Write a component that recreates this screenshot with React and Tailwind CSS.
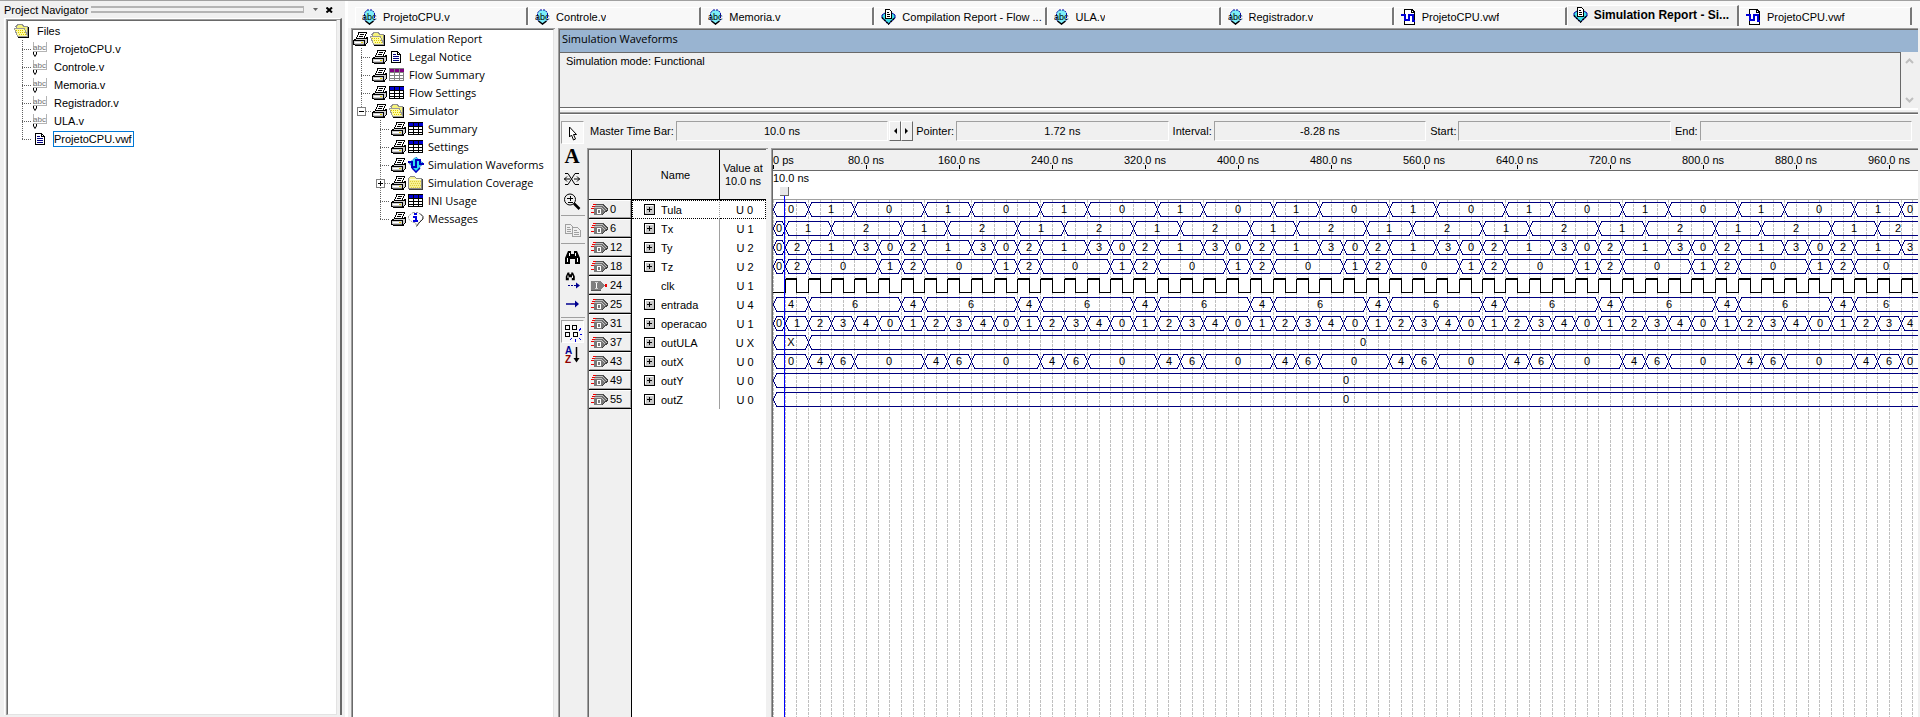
import React from "react";

const SANS = "font-['Liberation_Sans',Arial,sans-serif] text-[11px] leading-[14px]";
const HUMAN = "font-['Open_Sans','Noto_Sans',sans-serif] text-[11px] leading-[18px]";

/* ---------- tree and tab icons ---------- */

function FolderOpen() {
  return (
    <svg width="16" height="16" shapeRendering="crispEdges" className="shrink-0">
      <path d="M2 3.5 L4 1.5 H8 L10 3.5 H13.5 V13.5 H4 Z" fill="#f5f27a" stroke="#909090" />
      <path d="M0.5 5.5 H10.5 L13.5 13.5 H3.5 Z" fill="#fffba0" stroke="#9a9a9a" />
      <path d="M2 7h1v1h-1zM4 7h1v1h-1zM6 7h1v1h-1zM8 7h1v1h-1zM4 9h1v1h-1zM6 9h1v1h-1zM8 9h1v1h-1zM10 9h1v1h-1zM5 11h1v1h-1zM7 11h1v1h-1zM9 11h1v1h-1zM11 11h1v1h-1z" fill="#d8c800" />
      <path d="M14.5 4 V14.5 H4" fill="none" stroke="#000" />
    </svg>
  );
}

function FolderClosed() {
  return (
    <svg width="16" height="16" shapeRendering="crispEdges" className="shrink-0">
      <path d="M0.5 13.5 V3.5 L2.5 1.5 H6.5 L8.5 3.5 H13.5 V13.5 Z" fill="#f6f090" stroke="#8a8a8a" />
      <path d="M1.5 4.5 H13" stroke="#ffffd8" />
      <path d="M2 6.5H13M3 8.5H13M2 10.5H13M3 12.5H13" stroke="#dccb3c" strokeDasharray="1 1" />
      <path d="M14.5 4 V14.5 H1" fill="none" stroke="#404040" />
    </svg>
  );
}

function Printer() {
  return (
    <svg width="17" height="16" shapeRendering="crispEdges" className="shrink-0">
      <path d="M6 1.5 H13.5 L11 7.5 H3.5 Z" fill="#fff" stroke="#000" />
      <path d="M7 3.5H11M6 5.5H10" stroke="#000" />
      <path d="M0.5 9.5 L3.5 7.5 H12.5 L14.500 6.5 V11.5 L12 14.5 H2.5 L0.5 13 Z" fill="#d0d0d0" stroke="#000" />
      <path d="M1 9.5H11.5V14" fill="none" stroke="#000" />
      <path d="M2 11.5H10" stroke="#fff" />
      <path d="M2 13.5H11" stroke="#606060" />
      <path d="M8 11h2v1h-2z" fill="#e0d000" />
    </svg>
  );
}

function DocIcon() {
  return (
    <svg width="16" height="16" shapeRendering="crispEdges" className="shrink-0">
      <path d="M2.5 2.5 H8.5 L11.5 5.5 V13.5 H2.5 Z" fill="#fff" stroke="#000" />
      <path d="M8.5 2.5V5.5H11.5" fill="none" stroke="#000" />
      <path d="M4 5.5H7M4 7.5H10M4 9.5H10M4 11.5H10" stroke="#000080" />
    </svg>
  );
}

function TableIcon({ head, line }) {
  return (
    <svg width="16" height="16" shapeRendering="crispEdges" className="shrink-0">
      <rect x="0.5" y="1.5" width="14" height="12" fill="#fff" stroke={line} />
      <rect x="1" y="2" width="14" height="3" fill={head} />
      <path d="M1 5.5H15M1 8.5H15M1 11.5H15M5.5 2V14M10.5 2V14" stroke={line} />
    </svg>
  );
}
const SummaryIcon = () => <TableIcon head="#800080" line="#808080" />;
const GridIcon = () => <TableIcon head="#0000d0" line="#000" />;

function WaveIcon() {
  return (
    <svg width="16" height="16" className="shrink-0">
      <path d="M8 0 L15 6 L8 15.5 L1 6 Z" fill="#30e0f0" stroke="#2040c0" strokeDasharray="1 1" />
      <path d="M0 5H4V10H8V3H12V7H16" fill="none" stroke="#0000c0" strokeWidth="2" shapeRendering="crispEdges" />
      <path d="M4 11 L8 15 L12 11" fill="none" stroke="#0000c0" strokeWidth="1.5" />
    </svg>
  );
}

function MessagesIcon() {
  return (
    <svg width="16" height="16" className="shrink-0">
      <path d="M5 1.5 H10 L14.5 5 V8 L10.5 11.5 L8.5 15 L7.5 11.5 H5 L0.5 8 V5 Z" fill="#fff" stroke="#a0a0a0" strokeDasharray="2 1" />
      <path d="M12 2.5 L15 5.5 V8 L11 12 L8.500 15.500" fill="none" stroke="#303030" />
      <path d="M6 2h3v2h-3zM5 5h4v4h1v1.5h-5v-1.500h1.500v-2.500h-1.500z" fill="#0000e0" shapeRendering="crispEdges" />
    </svg>
  );
}

function VerilogFile() {
  return (
    <svg width="15" height="16" className="shrink-0">
      <path d="M0.5 1V8.500M0 10.5H13.500V1" fill="none" stroke="#b4b4b4" shapeRendering="crispEdges" />
      <text x="0" y="9" className="font-['Liberation_Sans',sans-serif] text-[8px]" fill="#707070">abc</text>
      <path d="M0.500 11V13L2 15.500L3.500 13V11" fill="none" stroke="#000" />
    </svg>
  );
}

function VerilogTab() {
  return (
    <svg width="15" height="16" className="shrink-0">
      <path d="M5 1 H10 L12.500 4 V11 L7.500 15 L2.500 11 V4 Z" fill="#7ceef8" stroke="#0000a0" strokeDasharray="2 1" />
      <path d="M3.500 12 L7.500 15 L11.500 12" fill="none" stroke="#000" strokeWidth="1.500" />
      <text x="0" y="11" className="font-['Liberation_Sans',sans-serif] text-[9px]" fill="#000">abc</text>
    </svg>
  );
}

function ReportTab() {
  return (
    <svg width="15" height="16" className="shrink-0">
      <path d="M1 6 L4 4 H11 L14 6 V9 L7.500 15 L1 9 Z" fill="#40e0e8" stroke="#0000a0" />
      <path d="M1 8.500 L7.500 15 L14 8.500" fill="none" stroke="#000" strokeDasharray="2 1" strokeWidth="1.500" />
      <g shapeRendering="crispEdges">
        <path d="M4.500 0.500 H8.500 L10.500 2.500 V9.500 H4.500 Z" fill="#fff" stroke="#000" />
        <path d="M6 3.500H8M6 5.500H9M6 7.500H9" stroke="#000" />
      </g>
    </svg>
  );
}

function WaveTab() {
  return (
    <svg width="15" height="16" shapeRendering="crispEdges" className="shrink-0">
      <path d="M3.500 5V0.500H11L13.500 3V15.500H3.500V11" fill="#fff" stroke="#000" />
      <path d="M10.500 0.500V3.500H13.500" fill="none" stroke="#000" />
      <path d="M0 6H4V11H8V6H12V12H14" fill="none" stroke="#0000d8" strokeWidth="2" />
    </svg>
  );
}

/* ---------- shared frames ---------- */

function Sunken({ className = "", inner = "", children }) {
  return (
    <div className={"flex border-l border-t border-[#a0a0a0] " + className}>
      <div className={"flex min-w-0 flex-1 border-l border-t border-[#696969] " + inner}>{children}</div>
    </div>
  );
}

/* ---------- project navigator ---------- */

const FILES = ["ProjetoCPU.v", "Controle.v", "Memoria.v", "Registrador.v", "ULA.v", "ProjetoCPU.vwf"];

function Branch({ last, className = "" }) {
  return (
    <svg width="19" height="18" shapeRendering="crispEdges" className={"shrink-0 " + className}>
      <path d={last ? "M8.500 0V10" : "M8.500 0V18"} stroke="#606060" strokeDasharray="1 1" />
      <path d="M8 9.500H18" stroke="#606060" strokeDasharray="1 1" />
    </svg>
  );
}

function Navigator() {
  return (
    <aside className="flex w-[345px] shrink-0 flex-col pb-[2px]">
      <header className="flex h-[17px] items-center pl-1 pr-2">
        <h2 className={SANS}>Project Navigator</h2>
        <div className="ml-[3px] h-[7px] flex-1 border-y-2 border-r border-[#b4b4b4]" />
        <button aria-label="Menu" className="ml-[5px] flex w-3 justify-center">
          <svg width="5" height="3"><path d="M0 0H5L2.500 3Z" fill="#606060" /></svg>
        </button>
        <button aria-label="Close" className="flex w-4 justify-center">
          <svg width="7" height="6"><path d="M0.500 0.500L6 5.500M6 0.500L0.500 5.500" stroke="#000" strokeWidth="2" /></svg>
        </button>
      </header>
      <div className="ml-1 mr-[3px] flex flex-1 border-l border-t border-white border-r-2 border-r-[#696969]">
        <Sunken className="ml-px flex-1" inner="bg-white border-b border-r border-b-[#e3e3e3] border-r-[#e3e3e3] mr-[3px]">
          <div className={"flex-1 pl-[6px] pt-px " + SANS}>
            <div className="flex h-[18px] items-center gap-[7px]">
              <FolderOpen />
              Files
            </div>
            <ul>
              {FILES.map((f, i) => (
                <li key={f} className="flex h-[18px] items-center">
                  <Branch last={i === FILES.length - 1} />
                  {i < 5 ? <VerilogFile /> : <DocIcon />}
                  {i < 5 ? (
                    <span className="ml-[6px]">{f}</span>
                  ) : (
                    <span className="ml-1 border border-[#0078d7] pr-px">{f}</span>
                  )}
                </li>
              ))}
            </ul>
          </div>
        </Sunken>
      </div>
    </aside>
  );
}

/* ---------- tab strip ---------- */

const TABS = [
  ["ProjetoCPU.v", VerilogTab],
  ["Controle.v", VerilogTab],
  ["Memoria.v", VerilogTab],
  ["Compilation Report - Flow ...", ReportTab],
  ["ULA.v", VerilogTab],
  ["Registrador.v", VerilogTab],
  ["ProjetoCPU.vwf", WaveTab],
  ["Simulation Report - Si...", ReportTab],
  ["ProjetoCPU.vwf", WaveTab],
];

function Tabs() {
  return (
    <div role="tablist" className="flex h-[27px] shrink-0 bg-[#f8f8f8] pl-[7px] pr-2">
      {TABS.map(([label, Icon], i) => {
        const active = i === 7;
        return (
          <button
            key={i}
            role="tab"
            aria-selected={active}
            className={
              "flex min-w-0 flex-1 items-center whitespace-nowrap border-l border-t border-white border-r-2 border-r-[#787878] text-left font-['Liberation_Sans',Arial,sans-serif] leading-[14px] " +
              (active ? "mb-[2px] mt-1 gap-[6px] bg-[#f0f0f0] pb-[2px] pl-[5px] text-[12px] font-bold" : "mb-[3px] mt-[6px] gap-[6px] pl-[6px] text-[11px]")
            }
          >
            <Icon />
            <span className="min-w-0 truncate">{label}</span>
          </button>
        );
      })}
    </div>
  );
}

/* ---------- report tree ---------- */

const REPORT = [
  { level: 1, label: "Legal Notice", Icon: DocIcon },
  { level: 1, label: "Flow Summary", Icon: SummaryIcon },
  { level: 1, label: "Flow Settings", Icon: GridIcon },
  { level: 1, label: "Simulator", Icon: FolderOpen, box: "-", last: true },
  { level: 2, label: "Summary", Icon: GridIcon },
  { level: 2, label: "Settings", Icon: GridIcon },
  { level: 2, label: "Simulation Waveforms", Icon: WaveIcon },
  { level: 2, label: "Simulation Coverage", Icon: FolderClosed, box: "+" },
  { level: 2, label: "INI Usage", Icon: GridIcon },
  { level: 2, label: "Messages", Icon: MessagesIcon, last: true },
];

function Expander({ sign, last }) {
  return (
    <button aria-label={sign === "+" ? "Expand" : "Collapse"} className="shrink-0">
      <svg width="19" height="18" shapeRendering="crispEdges" className="block">
        <path d={last ? "M8.500 0V5" : "M8.500 0V18"} stroke="#808080" strokeDasharray="1 1" />
        <path d="M13 9.500H19" stroke="#808080" strokeDasharray="1 1" />
        <rect x="4.500" y="5.500" width="8" height="8" fill="#fff" stroke="#808080" />
        <path d={sign === "+" ? "M6 9.500H11M8.500 7V12" : "M6 9.500H11"} stroke="#000" />
      </svg>
    </button>
  );
}

function ReportTree() {
  return (
    <Sunken className="ml-[3px] w-[204px] shrink-0" inner="mr-px border-r border-r-[#e3e3e3] bg-white">
      <div className={"min-w-0 flex-1 whitespace-nowrap " + HUMAN}>
        <div className="flex h-[18px] items-center">
          <Printer />
          <FolderOpen />
          <span className="ml-1">Simulation Report</span>
        </div>
        <ul>
          {REPORT.map(({ level, label, Icon, box, last }) => (
            <li key={label} className="flex h-[18px] items-center">
              {level === 2 && <span className="w-[19px] shrink-0" />}
              {box ? <Expander sign={box} last={last} /> : <Branch last={last} />}
              <Printer />
              <Icon />
              <span className="ml-1">{label}</span>
            </li>
          ))}
        </ul>
      </div>
    </Sunken>
  );
}

/* ---------- drawing toolbar ---------- */

const CursorTool = () => (
  <svg width="22" height="22"><path d="M7.500 5V15L9.500 13L11.500 18L13.500 17L11.500 12.500H14.500Z" fill="#fff" stroke="#000" /></svg>
);
const TextTool = () => (
  <svg width="22" height="22"><text x="10" y="18" textAnchor="middle" className="font-['Liberation_Serif',serif] text-[21px] font-bold">A</text></svg>
);
const FlipTool = () => (
  <svg width="22" height="22" fill="none" stroke="#000">
    <path d="M3 5.500H6L13 16.500H17M3 16.500H6L13 5.500H17M2 11H8M12 11H18" />
    <path d="M5 8.500L2.500 11L5 13.500M15 8.500L17.500 11L15 13.500" />
  </svg>
);
const ZoomTool = () => (
  <svg width="22" height="22" fill="none" stroke="#000">
    <circle cx="8" cy="8.500" r="5.500" />
    <path d="M5 7.500H11M8 4.500V10M5.500 11.500H10.500" shapeRendering="crispEdges" />
    <path d="M12 12.500L17.500 18" strokeWidth="2.500" />
  </svg>
);
const CopyTool = () => (
  <svg width="22" height="22" fill="#f0f0f0" stroke="#a0a0a0" shapeRendering="crispEdges">
    <path d="M3.500 5.500H8.500L10.500 7.500V14.500H3.500Z" />
    <path d="M10.500 8.500H15.500L18.500 11.500V17.500H10.500Z" />
    <path d="M5 8.500H8M5 10.500H9M5 12.500H9M12 11.500H15M12 13.500H17M12 15.500H17" />
  </svg>
);
const BINOC = "M3 17V11L6 4H9V7H12V4H15L18 11V17H13V12H8V17Z";
const FindTool = () => (
  <svg width="22" height="22">
    <path d={BINOC} fill="#000" />
    <path d="M5.500 11V15M7.500 6V9M13.500 6V9M15.500 11V15" stroke="#fff" shapeRendering="crispEdges" />
  </svg>
);
const FindNextTool = () => (
  <svg width="22" height="22">
    <path d={BINOC} fill="#000" transform="translate(2 0) scale(.6)" />
    <path d="M6 5.500V8M10.500 5.500V8" stroke="#fff" />
    <path d="M6 15.500H14" stroke="#000090" strokeDasharray="2 1" />
    <path d="M14 12.500L18 15.500L14 18.500Z" fill="#000090" />
  </svg>
);
const ArrowTool = () => (
  <svg width="22" height="22"><path d="M4 11H15" stroke="#000090" strokeWidth="1.500" /><path d="M13 7.500L17 11L13 14.500Z" fill="#000090" /></svg>
);
const SnapTool = () => (
  <svg width="22" height="22" fill="none" shapeRendering="crispEdges">
    <path d="M3.500 4.500H7.500V8.500H3.500ZM10.500 4.500H14.500V8.500H10.500ZM3.500 11.500H7.500V15.500H3.500ZM11.500 11.500H15.500V15.500H11.500Z" stroke="#000" />
    <path d="M17 9.500L19 7.500M17.500 13.500H20M17 17L19 19M13.500 18V21M10 17L8 19" stroke="#0000e0" />
  </svg>
);
const SortTool = () => (
  <svg width="22" height="22">
    <text x="3" y="10" className="font-['Liberation_Sans',sans-serif] text-[10px] font-bold" fill="#000090">A</text>
    <text x="3" y="19" className="font-['Liberation_Sans',sans-serif] text-[10px] font-bold" fill="#900000">Z</text>
    <path d="M14.500 3V16" stroke="#000" strokeWidth="1.500" />
    <path d="M11.500 14L14.500 18.500L17.500 14Z" fill="#000" />
  </svg>
);

const TOOLS = [
  ["Selection", CursorTool, true],
  ["Text", TextTool],
  ["Waveform editing", FlipTool],
  ["Zoom", ZoomTool],
  null,
  ["Copy", CopyTool],
  null,
  ["Find", FindTool],
  ["Find next", FindNextTool],
  ["Next transition", ArrowTool],
  null,
  ["Snap to grid", SnapTool, true],
  ["Sort", SortTool],
];

function Toolbar() {
  return (
    <div role="toolbar" className="flex w-[27px] shrink-0 flex-col pl-px pt-[6px]">
      {TOOLS.map((t, i) => {
        if (!t) return <div key={i} className="my-[2px] h-px w-6 shrink-0 bg-[#a0a0a0]" />;
        const [name, Icon, on] = t;
        return (
          <button
            key={i}
            aria-label={name}
            className={
              "flex h-[23px] w-[23px] shrink-0 items-center justify-center border " +
              (on ? "border-[#a0a0a0] border-b-white border-r-white bg-[#f8f8f8]" : "border-transparent")
            }
          >
            <Icon />
          </button>
        );
      })}
    </div>
  );
}

/* ---------- time bar ---------- */

function Field({ id, label, value }) {
  return (
    <>
      <label htmlFor={id} className="shrink-0">{label}</label>
      <input
        id={id}
        readOnly
        defaultValue={value}
        className="ml-[2px] h-5 min-w-0 flex-1 border border-[#a0a0a0] border-b-white border-r-white bg-transparent text-center outline-none"
      />
    </>
  );
}

function StepButton({ label, d }) {
  return (
    <button
      aria-label={label}
      className="flex h-5 w-3 shrink-0 items-center justify-center border border-white border-b-[#696969] border-r-[#696969]"
    >
      <svg width="4" height="6"><path d={d} fill="#000" /></svg>
    </button>
  );
}

function TimeBar() {
  return (
    <div className={"flex h-[33px] shrink-0 items-center pb-px pl-[3px] pr-[6px] " + SANS}>
      <Field id="master" label="Master Time Bar:" value="10.0 ns" />
      <div className="mr-[3px] flex pl-px">
        <StepButton label="Previous" d="M4 0V6L1 3Z" />
        <StepButton label="Next" d="M0 0V6L3 3Z" />
      </div>
      <Field id="pointer" label="Pointer:" value="1.72 ns" />
      <span className="w-1" />
      <Field id="interval" label="Interval:" value="-8.28 ns" />
      <span className="w-1" />
      <Field id="start" label="Start:" value="" />
      <span className="w-1" />
      <Field id="end" label="End:" value="" />
    </div>
  );
}

/* ---------- signals ---------- */

const END = 985;

function repeat(head, cycle) {
  const out = [...head];
  let t = head.length ? head[head.length - 1][0] : 0;
  for (let i = 0; t < END; i++) {
    const [dt, v] = cycle[i % cycle.length];
    t += dt;
    out.push([t, v]);
  }
  return out;
}

const SIGNALS = [
  { n: 0, name: "Tula", value: "U 0", seg: repeat([[30, "0"]], [[40, "1"], [60, "0"]]) },
  { n: 6, name: "Tx", value: "U 1", seg: repeat([[10, "0"]], [[40, "1"], [60, "2"]]) },
  { n: 12, name: "Ty", value: "U 2", seg: repeat([[10, "0"]], [[20, "2"], [40, "1"], [20, "3"], [20, "0"]]) },
  { n: 18, name: "Tz", value: "U 2", seg: repeat([[10, "0"]], [[20, "2"], [60, "0"], [20, "1"]]) },
  { n: 24, name: "clk", value: "U 1", clock: true },
  { n: 25, name: "entrada", value: "U 4", seg: repeat([[30, "4"]], [[80, "6"], [20, "4"]]) },
  { n: 31, name: "operacao", value: "U 1", seg: repeat([[10, "0"]], [[20, "1"], [20, "2"], [20, "3"], [20, "4"], [20, "0"]]) },
  { n: 37, name: "outULA", value: "U X", seg: [[30, "X"], [END, "0"]] },
  { n: 43, name: "outX", value: "U 0", seg: repeat([[30, "0"]], [[20, "4"], [20, "6"], [60, "0"]]) },
  { n: 49, name: "outY", value: "U 0", seg: [[END, "0"]] },
  { n: 55, name: "outZ", value: "U 0", seg: [[END, "0"]] },
];

function BusPin() {
  return (
    <svg width="17" height="13" shapeRendering="crispEdges" className="shrink-0">
      <path d="M5 1H12L16 5V7L12 12H3V5Z" fill="#c0c0c0" />
      <path d="M5 1.500H12L16.500 6" fill="none" stroke="#505050" />
      <path d="M4 3.500H11L15 7.500" fill="none" stroke="#707070" />
      <path d="M2 1.500H5M1 3.500H4M0 5.500H3M0 9.500H3" stroke="#f00000" />
      <path d="M3 5H10L14 8.500L11 12H3Z" fill="#787878" />
      <path d="M11 12L16.500 7V5" fill="none" stroke="#404040" />
      <rect x="6.500" y="6.500" width="3" height="4" fill="none" stroke="#fff" />
    </svg>
  );
}

function InputPin() {
  return (
    <svg width="17" height="13" shapeRendering="crispEdges" className="shrink-0">
      <path d="M0 2H10L14 6.500L10 11H0Z" fill="#808080" />
      <path d="M0 11.500H10" stroke="#505050" />
      <path d="M5.500 4V9" stroke="#fff" />
      <path d="M4 3.500H7M4 9.500H7" stroke="#d0d0d0" />
      <rect x="14" y="5" width="2" height="3" fill="#f00000" />
    </svg>
  );
}

function PlusBox() {
  return (
    <button aria-label="Expand" className="block h-[11px] w-[11px]">
      <svg width="11" height="11" shapeRendering="crispEdges" className="block">
        <rect x="0.500" y="0.500" width="10" height="10" fill="#c8c8c8" stroke="#000" />
        <path d="M1 1.500H9M1.500 1V9" stroke="#fff" />
        <path d="M3 5.500H8M5.500 3V8" stroke="#000" />
      </svg>
    </button>
  );
}

function SignalTable() {
  return (
    <Sunken className="w-[181px] shrink-0 bg-[#f0f0f0]" inner="mr-[2px]">
      <div className={"flex flex-1 flex-col bg-white " + SANS}>
        <table className="w-[177px] table-fixed border-separate border-spacing-0">
          <thead>
            <tr className="h-[50px] bg-[#f0f0f0]">
              <th className="w-[43px] border-b border-r border-black p-0" aria-label="Node" />
              <th className="w-[88px] border-b border-r border-black p-0 font-normal">Name</th>
              <th className="w-[46px] whitespace-nowrap border-b border-black p-0 text-center font-normal leading-[13px]">
                Value at
                <br />
                10.0 ns
              </th>
            </tr>
          </thead>
          <tbody>
            {SIGNALS.map((s, i) => (
              <tr key={s.n} className="h-[19px]">
                <td className="border-b border-r border-black bg-[#f0f0f0] p-0">
                  <div className="flex h-[18px] items-center gap-[2px] border-b border-l border-r border-t border-b-[#a0a0a0] border-l-white border-r-[#a0a0a0] border-t-white pl-px">
                    {s.clock ? <InputPin /> : <BusPin />}
                    {s.n}
                  </div>
                </td>
                <td className={i === 0 ? "border-y border-l border-r border-dotted border-black border-r-[#a0a0a0] p-0" : "border-r border-[#a0a0a0] p-0"}>
                  <div className={"flex items-center gap-[6px] " + (i === 0 ? "pl-[11px]" : "pl-3")}>
                    {s.clock ? <span className="w-[11px]" /> : <PlusBox />}
                    {s.name}
                  </div>
                </td>
                <td className={"p-0 pl-1 text-center " + (i === 0 ? "border-y border-r border-dotted border-black" : "")}>{s.value}</td>
              </tr>
            ))}
          </tbody>
        </table>
        <div className="flex flex-1">
          <div className="w-[43px] border-r border-black bg-[#f0f0f0]" />
        </div>
      </div>
    </Sunken>
  );
}

/* ---------- waveform chart ---------- */

const SCALE = 93 / 80;
const FAR = 6000;
const px = (t) => Math.round(t * SCALE);

function Bus({ seg, y }) {
  const top = y + 2.5;
  const bottom = y + 16.5;
  const mid = y + 9.5;
  return seg.map(([t, v], i) => {
    const a = px(i ? seg[i - 1][0] : 0) + 0.5;
    const open = t >= END;
    const b = px(Math.min(t, END)) + 0.5;
    const d = open
      ? `M${FAR} ${top}H${a + 3}L${a} ${mid}L${a + 3} ${bottom}H${FAR}`
      : `M${a + 3} ${top}H${b - 3}L${b} ${mid}L${b - 3} ${bottom}H${a + 3}L${a} ${mid}Z`;
    return (
      <g key={i}>
        <path d={d} fill="none" stroke="#000080" shapeRendering="crispEdges" />
        <text x={Math.floor((a + b) / 2)} y={y + 13} textAnchor="middle">{v}</text>
      </g>
    );
  });
}

function Clock({ y }) {
  const hi = y + 3;
  const lo = y + 16.5;
  let d = `M0 ${lo}`;
  const tops = [];
  for (let t = 10; t < END; t += 20) {
    const a = px(t) + 0.5;
    const b = px(t + 10) + 0.5;
    d += `H${a}V${hi}H${b}V${lo}`;
    tops.push(`M${a} ${hi}H${b}`);
  }
  return (
    <g fill="none" stroke="#000" shapeRendering="crispEdges">
      <path d={d + `H${px(END)}`} />
      <path d={tops.join("")} strokeWidth="2" />
    </g>
  );
}

function Waveforms() {
  const grid = Array.from({ length: 99 }, (_, i) => px(i * 10));
  const ticks = Array.from({ length: 13 }, (_, i) => i * 80);
  return (
    <Sunken className="min-w-0 flex-1" inner="bg-white">
      <svg width="100%" height="100%" className="block min-w-0 flex-1 overflow-hidden font-['Liberation_Sans',Arial,sans-serif] text-[11px]" role="img" aria-label="Simulation waveforms">
        <rect width="100%" height="20" fill="#f0f0f0" />
        <rect y="20" width="100%" height="1" fill="#696969" />
        <rect y="49" width="100%" height="1" fill="#a0a0a0" />
        {ticks.map((t) => (
          <g key={t}>
            <rect x={px(t)} y="15" width="1" height="4" fill="#000" />
            <text x={px(t)} y="14" textAnchor={t ? "middle" : "start"}>{t ? `${t}.0 ns` : "0 ps"}</text>
          </g>
        ))}
        <text x="0" y="32">10.0 ns</text>
        <g stroke="#c0c0c0" strokeDasharray="3 1" shapeRendering="crispEdges">
          {grid.map((x) => (
            <line key={x} x1={x + 0.5} x2={x + 0.5} y1="50" y2={FAR} />
          ))}
        </g>
        {SIGNALS.map((s, i) =>
          s.clock ? <Clock key={s.n} y={50 + i * 19} /> : <Bus key={s.n} seg={s.seg} y={50 + i * 19} />
        )}
        <g shapeRendering="crispEdges">
          <rect x={px(10) - 1} y="46" width="1" height="100%" fill="#0000ff" />
          <rect x="7" y="37" width="9" height="9" fill="#696969" />
          <rect x="7" y="37" width="8" height="8" fill="#e8e8e8" />
        </g>
      </svg>
    </Sunken>
  );
}

/* ---------- page ---------- */

function Chevron({ d }) {
  return (
    <button aria-label="Scroll" className="flex h-[17px] items-center justify-center">
      <svg width="9" height="6"><path d={d} fill="none" stroke="#bfbfbf" strokeWidth="2" /></svg>
    </button>
  );
}

export default function App() {
  return (
    <div className="flex h-screen min-w-[1200px] flex-col overflow-hidden border-t border-[#a0a0a0] bg-[#f0f0f0] text-black">
      <div className="flex min-h-0 flex-1">
        <Navigator />
        <div className="w-[3px] shrink-0 bg-white" />
        <div className="flex min-w-0 flex-1 flex-col">
          <Tabs />
          <div className="flex min-h-0 flex-1">
            <ReportTree />
            <Sunken className="ml-[3px] mr-[2px] min-w-0 flex-1" inner="flex-col">
              <h1 className={"h-[22px] shrink-0 bg-[#99b4d1] pl-[2px] " + HUMAN}>Simulation Waveforms</h1>
              <div className="flex h-14 shrink-0">
                <p className={"flex-1 border-y border-r border-[#696969] pl-[6px] pt-px " + SANS}>Simulation mode: Functional</p>
                <div className="flex w-[17px] flex-col justify-between">
                  <Chevron d="M1 5L4.500 1.500L8 5" />
                  <Chevron d="M1 1L4.500 4.500L8 1" />
                </div>
              </div>
              <div className="h-[2px] shrink-0 bg-white" />
              <div className="mt-[2px] h-[2px] shrink-0 border-b border-t border-b-[#696969] border-t-[#a0a0a0]" />
              <div className="flex min-h-0 flex-1 border-t border-white">
                <Toolbar />
                <div className="flex min-w-0 flex-1 flex-col">
                  <TimeBar />
                  <div className="flex min-h-0 flex-1">
                    <SignalTable />
                    <div className="w-[3px] shrink-0" />
                    <Waveforms />
                  </div>
                </div>
              </div>
            </Sunken>
          </div>
        </div>
      </div>
    </div>
  );
}
